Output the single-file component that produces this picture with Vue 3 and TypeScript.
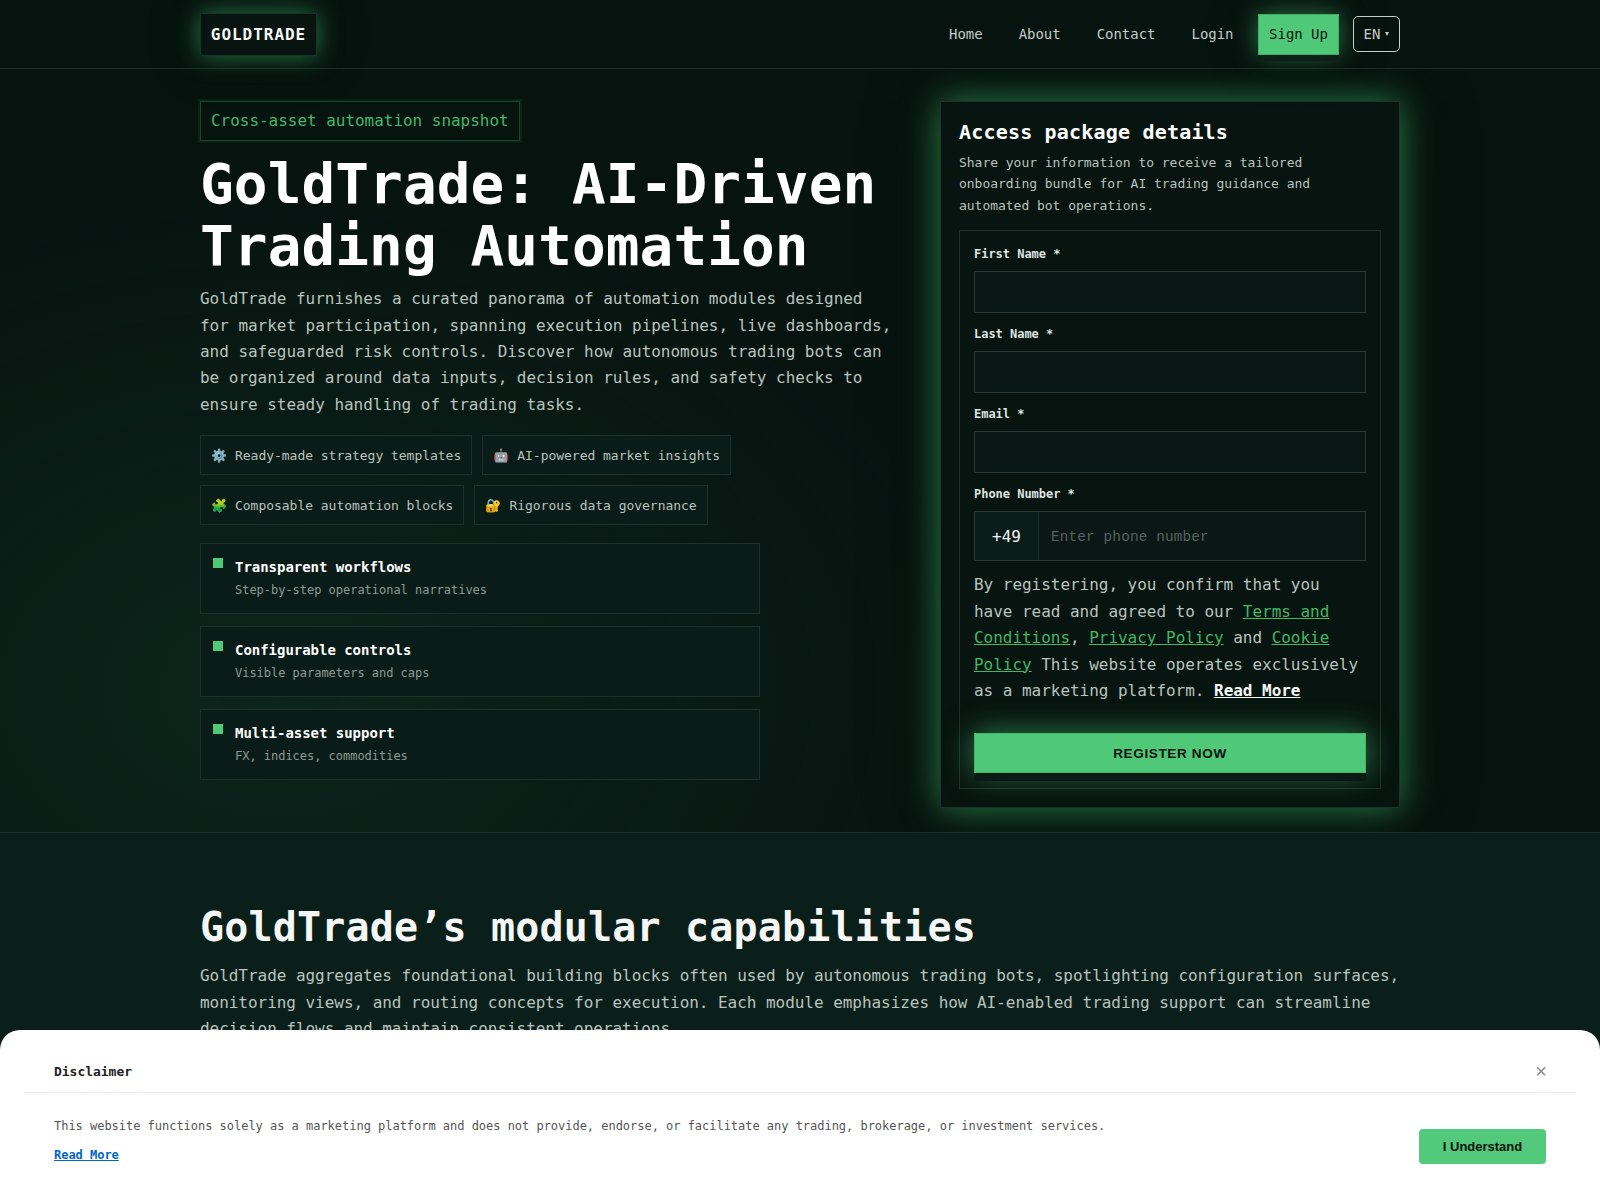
<script setup lang="ts">
import { ref } from 'vue'

const links = ['Home', 'About', 'Contact', 'Login']

const chips = [
  { icon: '⚙️', text: 'Ready-made strategy templates' },
  { icon: '🤖', text: 'AI-powered market insights' },
  { icon: '🧩', text: 'Composable automation blocks' },
  { icon: '🔐', text: 'Rigorous data governance' }
]

const features = [
  { title: 'Transparent workflows', text: 'Step-by-step operational narratives' },
  { title: 'Configurable controls', text: 'Visible parameters and caps' },
  { title: 'Multi-asset support', text: 'FX, indices, commodities' }
]

const fields = ['First Name *', 'Last Name *', 'Email *']

const showDisclaimer = ref(true)
</script>

<template>
  <div class="page">
    <header class="topbar">
      <div class="wrap topbar-row">
        <a class="logo">GOLDTRADE</a>
        <nav class="nav">
          <div class="nav-links">
            <a v-for="link in links" :key="link">{{ link }}</a>
          </div>
          <a class="signup">Sign Up</a>
          <button class="lang" type="button">EN<span class="caret"></span></button>
        </nav>
      </div>
    </header>

    <section class="hero">
      <div class="wrap hero-grid">
        <div class="hero-left">
          <div class="badge">Cross-asset automation snapshot</div>
          <h1>GoldTrade: AI-Driven Trading Automation</h1>
          <p class="lead">
            GoldTrade furnishes a curated panorama of automation modules designed for market participation, spanning execution pipelines, live dashboards, and safeguarded risk controls. Discover how autonomous trading bots can be organized around data inputs, decision rules, and safety checks to ensure steady handling of trading tasks.
          </p>
          <div class="chips">
            <div v-for="chip in chips" :key="chip.text" class="chip">
              <span class="chip-icon">{{ chip.icon }}</span>
              <span>{{ chip.text }}</span>
            </div>
          </div>
          <div class="features">
            <div v-for="item in features" :key="item.title" class="feature">
              <span class="square"></span>
              <div>
                <div class="feature-title">{{ item.title }}</div>
                <div class="feature-text">{{ item.text }}</div>
              </div>
            </div>
          </div>
        </div>

        <aside class="card">
          <h3>Access package details</h3>
          <p class="card-desc">
            Share your information to receive a tailored onboarding bundle for AI trading guidance and automated bot operations.
          </p>
          <form class="form" @submit.prevent>
            <label v-for="field in fields" :key="field" class="field">
              <span class="field-label">{{ field }}</span>
              <input type="text" />
            </label>
            <div class="field">
              <span class="field-label">Phone Number *</span>
              <div class="phone">
                <span class="prefix">+49</span>
                <input type="tel" placeholder="Enter phone number" />
              </div>
            </div>
            <p class="consent">
              By registering, you confirm that you have read and agreed to our <a class="green">Terms and Conditions</a>, <a class="green">Privacy Policy</a> and <a class="green">Cookie Policy</a> This website operates exclusively as a marketing platform. <a class="more">Read More</a>
            </p>
            <button class="register" type="submit">REGISTER NOW</button>
          </form>
        </aside>
      </div>
    </section>

    <section class="modules">
      <div class="wrap">
        <h2>GoldTrade’s modular capabilities</h2>
        <p class="lead modules-lead">
          GoldTrade aggregates foundational building blocks often used by autonomous trading bots, spotlighting configuration surfaces, monitoring views, and routing concepts for execution. Each module emphasizes how AI-enabled trading support can streamline decision flows and maintain consistent operations.
        </p>
      </div>
    </section>

    <div v-if="showDisclaimer" class="disclaimer">
      <div class="disclaimer-head">
        <strong>Disclaimer</strong>
        <button class="close" type="button" @click="showDisclaimer = false">×</button>
      </div>
      <div class="disclaimer-body">
        <div>
          <p>This website functions solely as a marketing platform and does not provide, endorse, or facilitate any trading, brokerage, or investment services.</p>
          <a class="disclaimer-link">Read More</a>
        </div>
        <button class="understand" type="button" @click="showDisclaimer = false">I Understand</button>
      </div>
    </div>
  </div>
</template>

<style>
html,
body {
  margin: 0;
  background: #0b1f1a;
}
</style>

<style scoped>
* {
  box-sizing: border-box;
  letter-spacing: -0.002em;
}

.page {
  min-height: 1200px;
  display: flex;
  flex-direction: column;
  font-family: 'DejaVu Sans Mono', 'Liberation Mono', monospace;
  color: #f4f7f5;
  background: #0b1f1a;
}

.wrap {
  width: 1200px;
  margin: 0 auto;
}

.topbar {
  height: 69px;
  background: #07130f;
  border-bottom: 1px solid #1c2b26;
  position: relative;
  z-index: 1;
}

.topbar-row {
  height: 68px;
  display: flex;
  align-items: flex-start;
  justify-content: space-between;
}

.logo {
  margin-top: 13px;
  height: 43px;
  width: 117px;
  display: flex;
  align-items: center;
  justify-content: center;
  font-size: 16px;
  font-weight: 700;
  letter-spacing: 0.96px;
  color: #f6f8f7;
  background: #07140f;
  border: 1px solid #173327;
  box-shadow: 0 0 24px rgba(62, 192, 106, 0.6), 0 0 50px rgba(0, 0, 0, 0.35);
}

.nav {
  display: flex;
  align-items: center;
  gap: 14px;
  height: 68px;
}

.nav-links {
  display: flex;
  gap: 36px;
  margin-right: 10.5px;
  font-size: 14px;
  color: #c3ccc7;
}

.signup {
  height: 41px;
  width: 81px;
  margin-top: 1px;
  display: flex;
  align-items: center;
  justify-content: center;
  padding-bottom: 1px;
  font-size: 14px;
  color: #07130f;
  background: #4fc978;
  border: 1px solid #3fae66;
  box-shadow: 0 6px 0 #0d1f18, 0 0 24px rgba(79, 201, 120, 0.55), 0 0 50px rgba(0, 0, 0, 0.35);
}

.lang {
  height: 36px;
  width: 47px;
  padding: 0;
  display: flex;
  align-items: center;
  justify-content: center;
  gap: 5px;
  font-family: inherit;
  font-size: 14px;
  color: #c3ccc7;
  background: transparent;
  border: 1px solid #c5cdc9;
  border-radius: 5px;
}

.caret {
  width: 0;
  height: 0;
  border-left: 2.5px solid transparent;
  border-right: 2.5px solid transparent;
  border-top: 4px solid #c3ccc7;
}

.hero {
  padding: 32px 0 24px;
  background:
    radial-gradient(ellipse 700px 500px at 280px 620px, rgba(16, 52, 38, 0.55), transparent 100%),
    #07130f;
  border-bottom: 1px solid #1c2f29;
}

.hero-grid {
  display: grid;
  grid-template-columns: 1fr 460px;
  gap: 40px;
  align-items: start;
}

.badge {
  display: inline-block;
  height: 40px;
  width: 320px;
  line-height: 38px;
  padding: 0 10px;
  font-size: 16px;
  color: #3fb868;
  border: 1px solid #164a30;
  box-shadow: 0 0 0 2px #0b2118;
}

h1 {
  margin: 12px 0 10px;
  font-size: 56px;
  line-height: 61.6px;
  font-weight: 700;
  letter-spacing: 0.1px;
  color: #fff;
}

.lead {
  margin: 0;
  font-size: 16px;
  line-height: 26.4px;
  color: #b9c3be;
}

.modules-lead {
  letter-spacing: -0.04px;
}

.chips {
  display: flex;
  flex-wrap: wrap;
  gap: 10px;
  margin-top: 17px;
}

.chip {
  height: 40px;
  display: flex;
  align-items: center;
  gap: 8px;
  padding: 0 10px;
  font-size: 13px;
  color: #b9c3be;
  background: #0a1c17;
  border: 1px solid #1d3029;
}

.chip-icon {
  width: 16px;
  text-align: center;
}

.features {
  width: 560px;
  margin-top: 18px;
  display: flex;
  flex-direction: column;
  gap: 12px;
}

.feature {
  height: 71px;
  display: flex;
  align-items: flex-start;
  gap: 12px;
  padding: 13px 12px;
  background: #0a1c17;
  border: 1px solid #1d3029;
}

.square {
  width: 10px;
  height: 10px;
  margin-top: 1px;
  flex: none;
  background: #4fc978;
}

.feature-title {
  font-size: 14px;
  line-height: 20px;
  font-weight: 700;
  color: #fff;
}

.feature-text {
  margin-top: 4px;
  font-size: 12px;
  line-height: 18px;
  color: #8d9a94;
}

.card {
  padding: 18px;
  background: #07140f;
  border: 1px solid #1c3329;
  box-shadow: 0 0 34px rgba(62, 192, 106, 0.65), 0 0 70px rgba(0, 0, 0, 0.4);
}

h3 {
  margin: 0;
  font-size: 20px;
  line-height: 24px;
  font-weight: 700;
  letter-spacing: 0.19px;
  color: #fff;
}

.card-desc {
  margin: 8px 0 14px;
  font-size: 13px;
  line-height: 21.45px;
  color: #b9c3be;
}

.form {
  display: flex;
  flex-direction: column;
  padding: 15px 14px 15px;
  border: 1px solid #1d3029;
}

.field {
  display: block;
  margin-bottom: 13px;
}

.field-label {
  display: block;
  margin-bottom: 9px;
  font-size: 12px;
  line-height: 16px;
  font-weight: 700;
  color: #dfe5e2;
}

input {
  display: block;
  width: 100%;
  height: 42px;
  padding: 0 12px;
  font-family: 'Liberation Mono', monospace;
  font-size: 14.4px;
  letter-spacing: 0.13px;
  color: #fff;
  background: #091814;
  border: 1px solid #2b3a35;
  outline: none;
}

input::placeholder {
  color: #55625d;
}

.phone {
  display: flex;
  height: 50px;
  background: #091814;
  border: 1px solid #2b3a35;
}

.prefix {
  width: 64px;
  flex: none;
  display: flex;
  align-items: center;
  justify-content: center;
  font-size: 16px;
  color: #f0f4f2;
  background: #0b1d18;
  border-right: 1px solid #1f2f2a;
}

.phone input {
  height: 48px;
  padding-top: 2px;
  border: 0;
  background: transparent;
}

.consent {
  margin: -2px 0 29px;
  font-size: 16px;
  line-height: 26.4px;
  color: #b9c3be;
}

.green {
  color: #3fb868;
  text-decoration: underline;
}

.more {
  font-weight: 700;
  color: #f4f7f5;
  text-decoration: underline;
}

.register {
  height: 40px;
  font-family: 'Liberation Sans', Arial, sans-serif;
  font-size: 13.6px;
  font-weight: 700;
  letter-spacing: 0.6px;
  color: #07130f;
  background: #4fc978;
  border: 1px solid #3fb868;
  box-shadow: 0 8px 0 #0b1a15, 0 0 30px rgba(79, 201, 120, 0.6);
}

.modules {
  flex: 1;
  padding-top: 72px;
  background: #0b1f1a;
}

h2 {
  margin: 0 0 14px;
  font-size: 40px;
  line-height: 44px;
  font-weight: 700;
  letter-spacing: 0.17px;
  color: #f4f7f5;
}

.disclaimer {
  position: fixed;
  left: 0;
  right: 0;
  bottom: 0;
  height: 170px;
  padding: 0 24px;
  color: #222;
  background: #fff;
  border-radius: 20px 20px 0 0;
}

.disclaimer-head {
  height: 63px;
  padding: 21px 30px 0;
  display: flex;
  align-items: center;
  justify-content: space-between;
  border-bottom: 1px solid #ececec;
  font-size: 13px;
}

.close {
  margin-right: -1px;
  padding: 0 0 2px;
  border: 0;
  background: none;
  font-family: 'Liberation Sans', Arial, sans-serif;
  font-size: 20px;
  line-height: 1;
  color: #8c8c8c;
}

.disclaimer-body {
  display: flex;
  justify-content: space-between;
  align-items: flex-start;
  padding: 25px 30px 0;
}

.disclaimer-body p {
  margin: 0 0 10px;
  font-size: 12px;
  line-height: 16px;
  color: #555;
}

.disclaimer-link {
  font-size: 12px;
  line-height: 16px;
  font-weight: 700;
  color: #0066cc;
  text-decoration: underline;
}

.understand {
  width: 127px;
  height: 35px;
  margin-top: 11px;
  font-family: 'Liberation Sans', Arial, sans-serif;
  font-size: 13px;
  font-weight: 700;
  letter-spacing: 0;
  color: #07130f;
  background: #52c97b;
  border: 0;
  border-radius: 4px;
}
</style>
